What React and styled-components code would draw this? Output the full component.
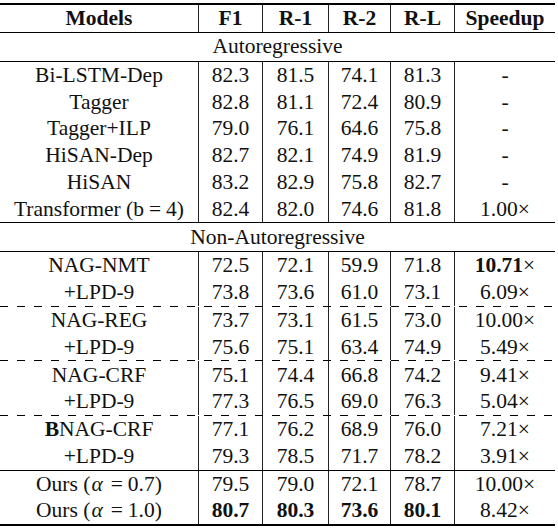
import styled, { createGlobalStyle } from 'styled-components'

const GlobalStyle = createGlobalStyle`
  body {
    margin: 0;
    background: #fff;
  }
`

const Wrapper = styled.main`
  padding-top: 3px;
  font-family: "Liberation Serif", "Times New Roman", serif;
  font-size: 21.5px;
  color: #111;
`

const Table = styled.div`
  width: 555px;
  border-top: 2px solid #000;
  border-bottom: 2px solid #000;
`

const Row = styled.div`
  display: grid;
  grid-template-columns: 198px 64px 66px 62px 64px 1fr;
  height: 26.8px;
  font-weight: ${p => (p.$header ? 700 : 400)};
`

const Cell = styled.div`
  display: flex;
  align-items: center;
  justify-content: center;
  padding-top: 1px;
  white-space: nowrap;
  line-height: 1;
  border-left: ${p => (p.$first ? 'none' : '1px solid #222')};

  b {
    font-weight: 700;
  }
`

const Section = styled.div`
  height: 26.8px;
  display: flex;
  align-items: center;
  justify-content: center;
  padding-top: 1px;
  line-height: 1;
`

const Rule = styled.div`
  height: 1px;
  background: #000;
`

const DashRule = styled.div`
  height: 1px;
  background: repeating-linear-gradient(to right, #000 0 8px, transparent 8px 17px);
`

const Alpha = styled.i`
  font-style: italic;
  margin: 0 3px 0 1px;
`

// math-mode spacing around "="
const Op = styled.span`
  margin: 0 5px;
`

const autoregressive = [
  ['Bi-LSTM-Dep', '82.3', '81.5', '74.1', '81.3', '-'],
  ['Tagger', '82.8', '81.1', '72.4', '80.9', '-'],
  ['Tagger+ILP', '79.0', '76.1', '64.6', '75.8', '-'],
  ['HiSAN-Dep', '82.7', '82.1', '74.9', '81.9', '-'],
  ['HiSAN', '83.2', '82.9', '75.8', '82.7', '-'],
  [<>Transformer (b<Op>=</Op>4)</>, '82.4', '82.0', '74.6', '81.8', '1.00×'],
]

// pairs of baseline + LPD rows, split by dashed rules
const nonAutoregressive = [
  [
    ['NAG-NMT', '72.5', '72.1', '59.9', '71.8', <><b>10.71</b>×</>],
    ['+LPD-9', '73.8', '73.6', '61.0', '73.1', '6.09×'],
  ],
  [
    ['NAG-REG', '73.7', '73.1', '61.5', '73.0', '10.00×'],
    ['+LPD-9', '75.6', '75.1', '63.4', '74.9', '5.49×'],
  ],
  [
    ['NAG-CRF', '75.1', '74.4', '66.8', '74.2', '9.41×'],
    ['+LPD-9', '77.3', '76.5', '69.0', '76.3', '5.04×'],
  ],
  [
    [<><b>B</b>NAG-CRF</>, '77.1', '76.2', '68.9', '76.0', '7.21×'],
    ['+LPD-9', '79.3', '78.5', '71.7', '78.2', '3.91×'],
  ],
]

const ours = [
  [<>Ours (<Alpha>α</Alpha><Op>=</Op>0.7)</>, '79.5', '79.0', '72.1', '78.7', '10.00×'],
  [<>Ours (<Alpha>α</Alpha><Op>=</Op>1.0)</>, <b>80.7</b>, <b>80.3</b>, <b>73.6</b>, <b>80.1</b>, '8.42×'],
]

const DataRow = ({ cells, header }) => (
  <Row $header={header}>
    {cells.map((c, i) => (
      <Cell key={i} $first={i === 0}>{c}</Cell>
    ))}
  </Row>
)

const App = () => {
  return (
    <Wrapper>
      <GlobalStyle />
      <Table>
        <DataRow header cells={['Models', 'F1', 'R-1', 'R-2', 'R-L', 'Speedup']} />
        <Rule />
        <Section>Autoregressive</Section>
        <Rule />
        {autoregressive.map((r, i) => <DataRow key={i} cells={r} />)}
        <Rule />
        <Section>Non-Autoregressive</Section>
        <Rule />
        {nonAutoregressive.map((group, g) => (
          <div key={g}>
            {g > 0 && <DashRule />}
            {group.map((r, i) => <DataRow key={i} cells={r} />)}
          </div>
        ))}
        <Rule />
        {ours.map((r, i) => <DataRow key={i} cells={r} />)}
      </Table>
    </Wrapper>
  )
}

export default App
